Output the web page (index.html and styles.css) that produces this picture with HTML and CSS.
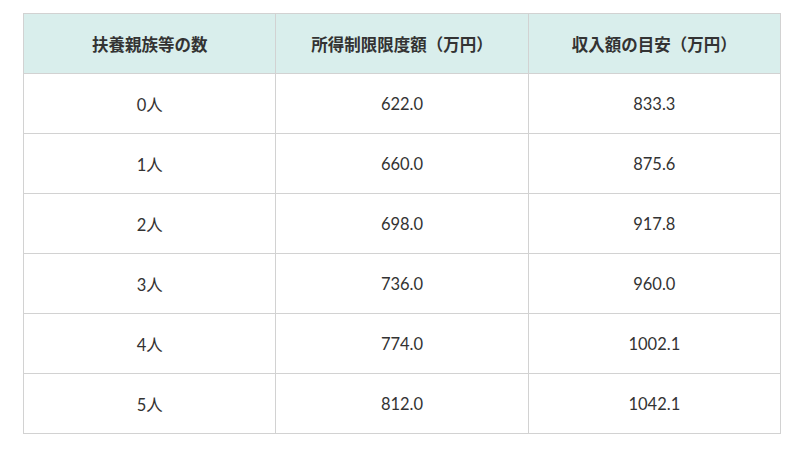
FILE: index.html
```html
<!DOCTYPE html>
<html lang="ja">
<head>
<meta charset="utf-8">
<link rel="stylesheet" href="styles.css">
</head>
<body>
<div class="wrap">
<table class="limit-table">
  <thead>
    <tr><th>扶養親族等の数</th><th>所得制限限度額（万円）</th><th>収入額の目安（万円）</th></tr>
  </thead>
  <tbody>
    <tr><td>0人</td><td>622.0</td><td>833.3</td></tr>
    <tr><td>1人</td><td>660.0</td><td>875.6</td></tr>
    <tr><td>2人</td><td>698.0</td><td>917.8</td></tr>
    <tr><td>3人</td><td>736.0</td><td>960.0</td></tr>
    <tr><td>4人</td><td>774.0</td><td>1002.1</td></tr>
    <tr><td>5人</td><td>812.0</td><td>1042.1</td></tr>
  </tbody>
</table>
</div>
</body>
</html>
```
FILE: styles.css
```css
html, body {
  margin: 0;
  padding: 0;
  background: #fff;
}
.wrap {
  padding: 13px 0 0 23px;
}
.limit-table {
  width: 758px;
  border-collapse: collapse;
  table-layout: fixed;
  font-family: Lato, "Noto Sans CJK JP", sans-serif;
  font-size: 16.5px;
  color: #333;
}
.limit-table th,
.limit-table td {
  border: 1px solid #d2d2d2;
  text-align: center;
  height: 59px;
  padding: 0;
}
.limit-table th {
  background: #d9eeec;
  font-weight: bold;
}
```
